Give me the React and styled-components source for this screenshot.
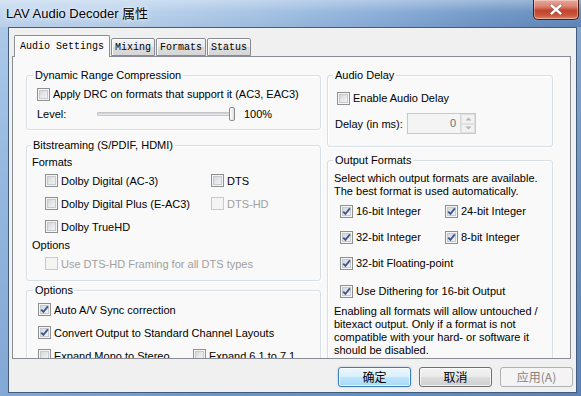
import React from "react";
import styled, { createGlobalStyle } from "styled-components";

const GlobalStyle = createGlobalStyle`
  html, body { margin: 0; padding: 0; overflow: hidden; background: #fff; }
  * { box-sizing: border-box; }
`;

const UI = `"Liberation Sans", Arial, "Noto Sans CJK SC", sans-serif`;
const CJK = `"Noto Sans CJK SC", "Liberation Sans", sans-serif`;

const Window = styled.div`
  width: 581px;
  height: 396px;
  display: flex;
  flex-direction: column;
  overflow: hidden;
  font-family: ${UI};
  font-size: 11px;
  color: #000;
  background:
    linear-gradient(90deg, rgba(255,255,255,0.18) 0%, rgba(255,255,255,0) 40%, rgba(0,0,40,0.12) 100%),
    linear-gradient(180deg, #9fc0e6 0%, #7fa8d8 45%, #6895cc 100%);
`;

const TitleBar = styled.div`
  height: 27px;
  flex: none;
  display: flex;
  align-items: flex-start;
  background:
    linear-gradient(180deg, rgba(255,255,255,0.35) 0%, rgba(255,255,255,0.05) 45%, rgba(0,0,0,0.03) 100%),
    linear-gradient(90deg, #c0d6ef 0%, #b9d1ec 22%, #a2c0e3 45%, #88acd8 65%, #6d94c5 85%, #5f88ba 100%);
`;

const TitleText = styled.div`
  margin: 6px 0 0 6px;
  font-family: "Liberation Sans", Arial, "Noto Sans CJK SC", sans-serif;
  font-size: 13px;
  line-height: 16px;
  color: #000;
  text-shadow: 0 0 6px rgba(255,255,255,0.95), 0 0 2px rgba(255,255,255,0.8);
`;

const CloseButton = styled.div`
  margin-left: auto;
  margin-right: 2px;
  width: 46px;
  height: 20px;
  border: 1px solid #4b1f1a;
  border-top: none;
  border-radius: 0 0 5px 5px;
  display: flex;
  align-items: center;
  justify-content: center;
  background: linear-gradient(180deg, #e9a99b 0%, #d9826f 35%, #c2432d 55%, #c9553a 80%, #e0866b 100%);
  box-shadow: inset 0 0 0 1px rgba(255,255,255,0.35);
`;

const Frame = styled.div`
  flex: 1;
  display: flex;
  padding: 0 4px 3px 8px;
  min-height: 0;
`;

const Client = styled.div`
  flex: 1;
  display: flex;
  flex-direction: column;
  background: #f0f0f0;
  border: 1px solid #435c7a;
  padding: 7px 5px 5px 3px;
`;

const TabStrip = styled.div`
  height: 21px;
  flex: none;
  display: flex;
  align-items: flex-end;
  padding-left: 2px;
  position: relative;
  z-index: 1;
`;

const Tab = styled.div`
  height: ${(p) => (p.$active ? 22 : 18)}px;
  margin-bottom: ${(p) => (p.$active ? -1 : 0)}px;
  margin-left: ${(p) => (p.$active ? 0 : 1)}px;
  padding: 0 ${(p) => (p.$active ? 5 : 3)}px;
  border: 1px solid #898c95;
  border-bottom: ${(p) => (p.$active ? "none" : "1px solid #898c95")};
  border-radius: 2px 2px 0 0;
  display: flex;
  align-items: center;
  padding-top: ${(p) => (p.$active ? 0 : 1)}px;
  font-family: "Liberation Mono", "Courier New", monospace;
  font-size: 10px;
  line-height: 12px;
  color: #000;
  white-space: pre;
  background: ${(p) =>
    p.$active
      ? "#f9f9f9"
      : "linear-gradient(180deg, #f3f3f3 0%, #ebebeb 50%, #dddddd 51%, #d6d6d6 100%)"};
  box-shadow: inset 1px 1px 0 #fff;
`;

const TabPanel = styled.div`
  height: 303px;
  flex: none;
  border: 1px solid #898c95;
  background: #f9f9f9;
  overflow: hidden;
  display: flex;
  align-items: flex-start;
  gap: 6px;
  padding: 11px 0 0 13px;
`;

const Column = styled.div`
  width: ${(p) => p.$w}px;
  flex: none;
  display: flex;
  flex-direction: column;
`;

const GroupBox = styled.fieldset`
  margin: ${(p) => p.$mt || 0}px 0 0 0;
  padding: 0;
  min-width: 0;
  height: ${(p) => p.$h}px;
  flex: none;
  border: 1px solid #d5dfe5;
  border-radius: 3px;
  box-shadow: inset 1px 1px 0 #fff, 1px 1px 0 #fff;
`;

const Legend = styled.legend`
  margin-left: ${(p) => p.$lx}px;
  padding: 0 2px;
  font-size: 11px;
  line-height: 14px;
  color: #000;
`;

const GroupBody = styled.div`
  display: flex;
  flex-direction: column;
  padding: ${(p) => p.$pt || 0}px 0 0 ${(p) => p.$pl || 0}px;
`;

const Row = styled.div`
  height: ${(p) => p.$h}px;
  margin-top: ${(p) => p.$mt || 0}px;
  margin-left: ${(p) => p.$ml || 0}px;
  display: flex;
  align-items: center;
  white-space: nowrap;
`;

const CheckGrid = styled.div`
  display: grid;
  grid-template-columns: ${(p) => p.$col}px auto;
  grid-auto-rows: ${(p) => p.$h}px;
  margin-left: ${(p) => p.$ml || 0}px;
  align-items: center;
`;

const Check = styled.label`
  display: flex;
  align-items: center;
  gap: 3px;
  white-space: nowrap;
  color: ${(p) => (p.$disabled ? "#a0a0a0" : "#000")};
`;

const Box = styled.span`
  width: 13px;
  height: 13px;
  flex: none;
  display: flex;
  align-items: center;
  justify-content: center;
  border: 1px solid ${(p) => (p.$disabled ? "#c9c9c9" : "#8e8f8f")};
  background: ${(p) =>
    p.$disabled ? "#f4f4f4" : "linear-gradient(135deg, #c9ccd1 0%, #e6e7e9 50%, #f8f8f8 100%)"};
  box-shadow: ${(p) =>
    p.$disabled ? "none" : "inset 0 0 0 1px #f5f5f5, inset 0 0 0 2px #c6c9ce"};
`;

const SubLabel = styled.div`
  line-height: 14px;
  height: 14px;
  margin-top: ${(p) => p.$mt || 0}px;
`;

const Text = styled.div`
  line-height: 13px;
  white-space: nowrap;
  margin-top: ${(p) => p.$mt || 0}px;
`;

const FieldLabel = styled.span`
  width: ${(p) => p.$w}px;
  flex: none;
`;

const Slider = styled.div`
  width: 138px;
  height: 16px;
  display: flex;
  align-items: center;
  flex: none;
`;

const Track = styled.div`
  flex: 1;
  height: 4px;
  border: 1px solid #c4c6c9;
  border-radius: 1px;
  background: #e7e8ea;
  box-shadow: inset 0 1px 0 #d2d4d6;
`;

const Thumb = styled.div`
  width: 6px;
  height: 14px;
  margin-left: -2px;
  border: 1px solid #8a8c8f;
  border-radius: 2px;
  background: linear-gradient(90deg, #ffffff 0%, #ececec 60%, #dcdcdc 100%);
`;

const SliderValue = styled.span`
  margin-left: 9px;
`;

const Spin = styled.div`
  width: 69px;
  height: 21px;
  border: 1px solid #c6c8cb;
  background: #f4f4f4;
  display: flex;
  align-items: stretch;
`;

const SpinValue = styled.div`
  flex: 1;
  text-align: right;
  padding-right: 4px;
  line-height: 19px;
  color: #6d6d6d;
`;

const SpinButtons = styled.div`
  width: 15px;
  display: flex;
  flex-direction: column;
  border-left: 1px solid #dadada;
`;

const SpinHalf = styled.div`
  flex: 1;
  display: flex;
  align-items: center;
  justify-content: center;
  background: #f2f2f2;
  border: 1px solid #e0e0e0;
`;

const Note = styled.div`
  line-height: 13px;
  margin-top: 1px;
`;

const ButtonRow = styled.div`
  display: flex;
  justify-content: flex-end;
  gap: 8px;
  margin: 8px -2px 0 0;
`;

const Button = styled.div`
  width: 73px;
  height: 20px;
  border-radius: 3px;
  display: flex;
  align-items: center;
  justify-content: center;
  font-family: ${CJK};
  font-size: 12px;
  line-height: 14px;
  border: 1px solid
    ${(p) => (p.$variant === "default" ? "#3c7fb1" : p.$variant === "disabled" ? "#adb2b5" : "#707070")};
  color: ${(p) => (p.$variant === "disabled" ? "#838383" : "#000")};
  background: ${(p) =>
    p.$variant === "default"
      ? "linear-gradient(180deg, #eaf6fd 0%, #d9f0fc 48%, #bee6fd 52%, #a7d9f5 100%)"
      : p.$variant === "disabled"
      ? "#f4f4f4"
      : "linear-gradient(180deg, #f2f2f2 0%, #ebebeb 48%, #dddddd 52%, #cfcfcf 100%)"};
  box-shadow: ${(p) =>
    p.$variant === "default"
      ? "inset 0 0 0 1px rgba(255,255,255,0.7), 0 0 2px rgba(60,127,177,0.45)"
      : p.$variant === "disabled"
      ? "none"
      : "inset 0 0 0 1px rgba(255,255,255,0.7)"};
`;

function CheckBox({ checked, disabled, children }) {
  return (
    <Check $disabled={disabled}>
      <Box $disabled={disabled}>
        {checked && (
          <svg width="11" height="11" viewBox="0 0 11 11">
            <path d="M2.2 5.6 L4.4 7.9 L8.9 2.4" fill="none" stroke="#3d5a8f" strokeWidth="1.9" />
          </svg>
        )}
      </Box>
      <span>{children}</span>
    </Check>
  );
}

const Arrow = ({ up }) => (
  <svg width="7" height="4" viewBox="0 0 7 4">
    <path d={up ? "M0.5 3.5 L3.5 0.5 L6.5 3.5 Z" : "M0.5 0.5 L3.5 3.5 L6.5 0.5 Z"} fill="#b4b4b4" />
  </svg>
);

export default function App() {
  return (
    <>
      <GlobalStyle />
      <Window>
        <TitleBar>
          <TitleText>LAV Audio Decoder 属性</TitleText>
          <CloseButton>
            <svg width="14" height="11" viewBox="0 0 14 11">
              <path d="M2.5 1.5 L11.5 9.5 M11.5 1.5 L2.5 9.5" stroke="#5a1a10" strokeWidth="3.6" strokeLinecap="round" opacity="0.45" />
              <path d="M2.5 1.5 L11.5 9.5 M11.5 1.5 L2.5 9.5" stroke="#ffffff" strokeWidth="2.4" strokeLinecap="round" />
            </svg>
          </CloseButton>
        </TitleBar>
        <Frame>
          <Client>
            <TabStrip>
              <Tab $active>Audio Settings</Tab>
              <Tab>Mixing</Tab>
              <Tab>Formats</Tab>
              <Tab>Status</Tab>
            </TabStrip>
            <TabPanel>
              <Column $w={295}>
                <GroupBox $h={62}>
                  <Legend $lx={6}>Dynamic Range Compression</Legend>
                  <GroupBody $pl={10} $pt={4}>
                    <Row $h={16}>
                      <CheckBox>Apply DRC on formats that support it (AC3, EAC3)</CheckBox>
                    </Row>
                    <Row $h={16} $mt={4}>
                      <FieldLabel $w={60}>Level:</FieldLabel>
                      <Slider>
                        <Track />
                        <Thumb />
                      </Slider>
                      <SliderValue>100%</SliderValue>
                    </Row>
                  </GroupBody>
                </GroupBox>

                <GroupBox $h={143} $mt={8}>
                  <Legend $lx={4}>Bitstreaming (S/PDIF, HDMI)</Legend>
                  <GroupBody $pl={5} $pt={3}>
                    <SubLabel>Formats</SubLabel>
                    <CheckGrid $col={166} $h={23} $ml={13}>
                      <CheckBox>Dolby Digital (AC-3)</CheckBox>
                      <CheckBox>DTS</CheckBox>
                      <CheckBox>Dolby Digital Plus (E-AC3)</CheckBox>
                      <CheckBox disabled>DTS-HD</CheckBox>
                      <CheckBox>Dolby TrueHD</CheckBox>
                    </CheckGrid>
                    <SubLabel>Options</SubLabel>
                    <Row $h={23} $ml={13}>
                      <CheckBox disabled>Use DTS-HD Framing for all DTS types</CheckBox>
                    </Row>
                  </GroupBody>
                </GroupBox>

                <GroupBox $h={110} $mt={2}>
                  <Legend $lx={6}>Options</Legend>
                  <GroupBody $pl={11} $pt={1}>
                    <Row $h={23}>
                      <CheckBox checked>Auto A/V Sync correction</CheckBox>
                    </Row>
                    <Row $h={23}>
                      <CheckBox checked>Convert Output to Standard Channel Layouts</CheckBox>
                    </Row>
                    <CheckGrid $col={155} $h={23}>
                      <CheckBox>Expand Mono to Stereo</CheckBox>
                      <CheckBox>Expand 6.1 to 7.1</CheckBox>
                    </CheckGrid>
                  </GroupBody>
                </GroupBox>
              </Column>

              <Column $w={226}>
                <GroupBox $h={79}>
                  <Legend $lx={5}>Audio Delay</Legend>
                  <GroupBody $pl={9} $pt={8}>
                    <Row $h={16}>
                      <CheckBox>Enable Audio Delay</CheckBox>
                    </Row>
                    <Row $h={21} $mt={7} $ml={-2}>
                      <FieldLabel $w={72}>Delay (in ms):</FieldLabel>
                      <Spin>
                        <SpinValue>0</SpinValue>
                        <SpinButtons>
                          <SpinHalf>
                            <Arrow up />
                          </SpinHalf>
                          <SpinHalf>
                            <Arrow />
                          </SpinHalf>
                        </SpinButtons>
                      </Spin>
                    </Row>
                  </GroupBody>
                </GroupBox>

                <GroupBox $h={240} $mt={6}>
                  <Legend $lx={5}>Output Formats</Legend>
                  <GroupBody $pl={6} $pt={5}>
                    <Text>Select which output formats are available.</Text>
                    <Text>The best format is used automatically.</Text>
                    <CheckGrid $col={105} $h={26} $ml={6}>
                      <CheckBox checked>16-bit Integer</CheckBox>
                      <CheckBox checked>24-bit Integer</CheckBox>
                      <CheckBox checked>32-bit Integer</CheckBox>
                      <CheckBox checked>8-bit Integer</CheckBox>
                      <CheckBox checked>32-bit Floating-point</CheckBox>
                    </CheckGrid>
                    <Row $h={26} $mt={2} $ml={6}>
                      <CheckBox checked>Use Dithering for 16-bit Output</CheckBox>
                    </Row>
                    <Note>
                      Enabling all formats will allow untouched /<br />
                      bitexact output. Only if a format is not<br />
                      compatible with your hard- or software it<br />
                      should be disabled.
                    </Note>
                  </GroupBody>
                </GroupBox>
              </Column>
            </TabPanel>
            <ButtonRow>
              <Button $variant="default">确定</Button>
              <Button>取消</Button>
              <Button $variant="disabled">应用(A)</Button>
            </ButtonRow>
          </Client>
        </Frame>
      </Window>
    </>
  );
}
